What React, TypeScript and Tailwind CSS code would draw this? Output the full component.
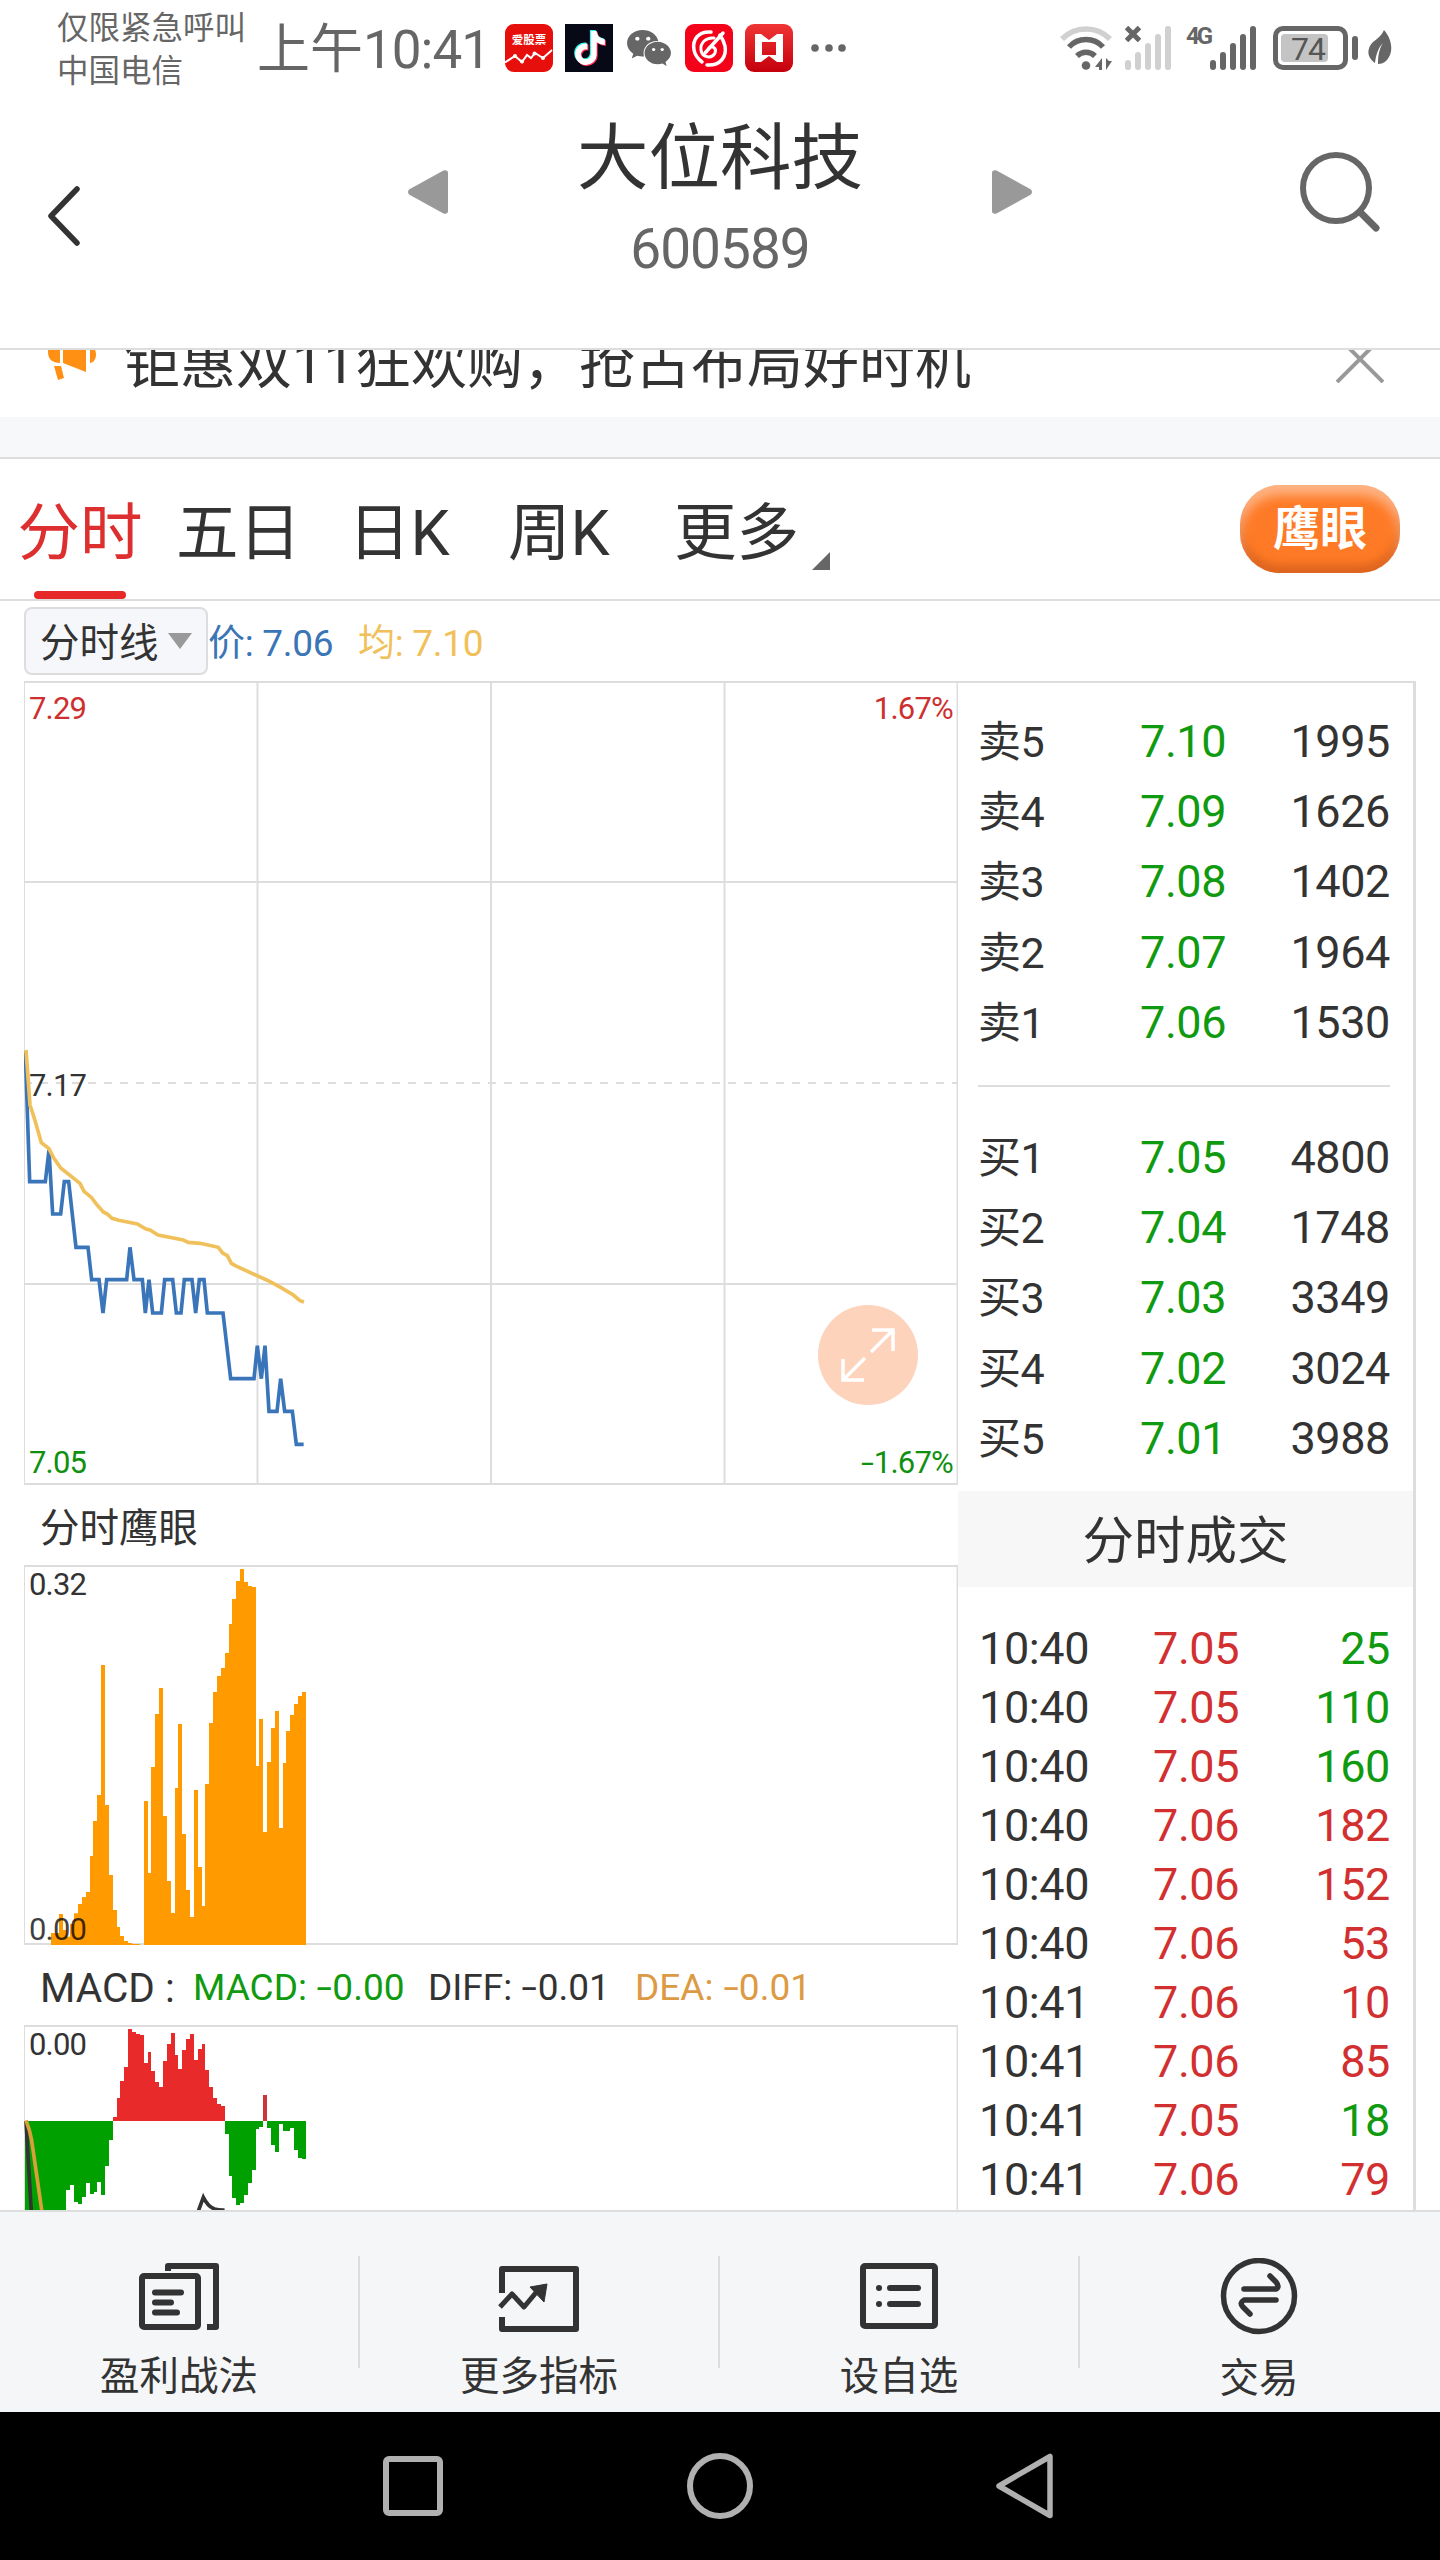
import type { ReactNode } from 'react';
import clsx from 'clsx';
import { FaTiktok, FaWeixin } from 'react-icons/fa6';

type Step = [x: number, y: number];

const asks = [
  ['卖5', '7.10', '1995'],
  ['卖4', '7.09', '1626'],
  ['卖3', '7.08', '1402'],
  ['卖2', '7.07', '1964'],
  ['卖1', '7.06', '1530'],
];

const bids = [
  ['买1', '7.05', '4800'],
  ['买2', '7.04', '1748'],
  ['买3', '7.03', '3349'],
  ['买4', '7.02', '3024'],
  ['买5', '7.01', '3988'],
];

const trades = [
  { time: '10:40', price: '7.05', volume: 25, side: 'sell' },
  { time: '10:40', price: '7.05', volume: 110, side: 'sell' },
  { time: '10:40', price: '7.05', volume: 160, side: 'sell' },
  { time: '10:40', price: '7.06', volume: 182, side: 'buy' },
  { time: '10:40', price: '7.06', volume: 152, side: 'buy' },
  { time: '10:40', price: '7.06', volume: 53, side: 'buy' },
  { time: '10:41', price: '7.06', volume: 10, side: 'buy' },
  { time: '10:41', price: '7.06', volume: 85, side: 'buy' },
  { time: '10:41', price: '7.05', volume: 18, side: 'sell' },
  { time: '10:41', price: '7.06', volume: 79, side: 'buy' },
];

// Chart series are stored at 3 units per pixel, bars as [left, top]
const pricePoints =
  '76,65 89,455 136,455 147,360 158,552 182,552 193,455 206,455 228,652 264,652 275,749 297,749 309,849 320,749 380,749 390,652 402,749 427,749 436,849 447,749 458,849 484,849 494,749 518,749 529,849 543,849 553,749 576,749 587,849 598,749 612,749 622,849 669,849 692,1046 762,1046 772,947 784,1046 795,947 807,1144 831,1144 842,1046 854,1144 877,1144 889,1243 911,1243';
const averagePoints =
  '78,60 90,225 103,265 124,338 147,356 160,382 182,414 240,460 252,484 275,503 288,521 310,546 322,552 336,565 356,571 412,582 438,597 450,600 474,615 550,630 565,637 600,640 655,652 668,669 682,677 694,700 706,707 738,722 800,750 842,772 880,795 900,812 912,816';

const eagleLeft: Step[] = [
  [153, 1299], [177, 1242], [189, 1290], [201, 1310], [210, 1272], [222, 1240], [234, 1212], [246, 1191], [258, 1176],
  [270, 1068], [279, 963], [291, 885], [303, 495], [315, 915], [327, 1125], [339, 1230], [351, 1281], [360, 1308],
  [372, 1323], [384, 1329], [396, 1332],
];
const eagleRight: Step[] = [
  [432, 903], [444, 1119], [453, 801], [465, 642], [477, 564], [489, 948], [501, 1143], [513, 1239], [525, 864],
  [534, 672], [546, 1002], [558, 1170], [570, 1251], [582, 870], [594, 1101], [606, 1218], [615, 852], [627, 669],
  [639, 576], [651, 528], [663, 504], [675, 459], [687, 372], [696, 297], [708, 243], [720, 207], [732, 246],
  [744, 258], [756, 261], [768, 798], [777, 657], [789, 996], [801, 786], [813, 684], [825, 633], [837, 984],
  [849, 789], [858, 693], [870, 645], [882, 612], [894, 588], [906, 576],
];
const macdFall: Step[] = [
  [75, 760], [198, 690], [210, 675], [222, 726], [234, 732], [246, 711], [258, 669], [270, 702], [282, 696],
  [291, 666], [303, 705], [315, 618], [327, 540],
];
const macdRise: Step[] = [
  [339, 471], [351, 414], [360, 363], [372, 321], [384, 207], [396, 216], [408, 222], [420, 225], [432, 309],
  [444, 276], [453, 333], [465, 366], [477, 381], [489, 303], [501, 252], [513, 219], [525, 285], [534, 327],
  [546, 270], [558, 237], [570, 222], [582, 300], [594, 267], [606, 252], [615, 330], [627, 381], [639, 414],
  [651, 432], [663, 438],
];
const macdDip: Step[] = [
  [675, 522], [687, 648], [696, 714], [708, 735], [720, 729], [732, 705], [744, 669], [756, 630], [768, 507], [777, 501],
];
const macdTail: Step[] = [
  [801, 504], [813, 555], [825, 576], [837, 492], [849, 513], [870, 504], [882, 570], [894, 594], [906, 597],
];

function stepPath(steps: Step[], end: number, base: number) {
  return `M${steps[0][0]} ${base}${steps.map(([x, y]) => `H${x}V${y}`).join('')}H${end}V${base}Z`;
}

function SignalBars({ className }: { className: string }) {
  return (
    <svg className={className} width="46" height="44" viewBox="0 0 46 44" fill="currentColor">
      <rect x="0" y="34" width="6" height="10" rx="3" />
      <rect x="10" y="26" width="6" height="18" rx="3" />
      <rect x="20" y="17" width="6" height="27" rx="3" />
      <rect x="30" y="8" width="6" height="36" rx="3" />
      <rect x="40" y="0" width="6" height="44" rx="3" />
    </svg>
  );
}

function StatusBar() {
  return (
    <div className="flex h-[96px] items-center pl-[57px] pr-[48px] text-[#666]">
      <div className="w-[200px] pt-1 text-[31.5px] leading-[43px]">
        <div>仅限紧急呼叫</div>
        <div>中国电信</div>
      </div>
      <div className="w-[248px] whitespace-nowrap pt-1 text-[53px] leading-[60px]">
        上午<span className="tracking-[-1px]">10:41</span>
      </div>

      <div className="flex items-center gap-3">
        <svg width="48" height="48" viewBox="0 0 48 48">
          <rect width="48" height="48" rx="9" fill="#e60f0c" />
          <text x="24" y="20" textAnchor="middle" fontSize="11.5" fontWeight="700" fill="#fff">爱股票</text>
          <path d="M0 38.5 10 32l7 6 5-7 4 3 4-5 8 5 9-8" fill="none" stroke="#fff" strokeWidth="2" />
          <g fill="#fff">
            <circle cx="10" cy="32" r="2" />
            <circle cx="17" cy="37.500" r="2" />
            <circle cx="29.500" cy="29.500" r="2" />
            <circle cx="38" cy="34" r="2" />
          </g>
        </svg>
        <div className="relative size-12 bg-[#070916]">
          <FaTiktok className="absolute left-[7px] top-[6px] size-[34px] text-[#25f4ee]" />
          <FaTiktok className="absolute left-[9px] top-[8px] size-[34px] text-[#fe2c55]" />
          <FaTiktok className="absolute left-[8px] top-[7px] size-[34px] text-white" />
        </div>
        <FaWeixin className="size-12 px-px text-[#666]" />
        <svg width="48" height="48" viewBox="0 0 48 48">
          <rect width="48" height="48" rx="9" fill="#f40219" />
          <g fill="none" stroke="#fff" strokeLinecap="round">
            <path d="M26 8C14 7 7 15 9 26c1 5 4 9 8 12" strokeWidth="3.500" />
            <path d="M22 41c13 1 20-8 18-19-1-5-3-8-5-11" strokeWidth="3.500" />
            <path d="M29 14c-8-1-14 5-13 12 1 8 11 9 14 3 2-5-3-8-6-5" strokeWidth="3" />
            <path d="M38 9 20 29" strokeWidth="3.500" />
          </g>
        </svg>
        <svg width="48" height="48" viewBox="0 0 48 48">
          <defs>
            <linearGradient id="red" x1="0" y1="0" x2="0" y2="1">
              <stop offset="0" stopColor="#f03535" />
              <stop offset="1" stopColor="#c4000c" />
            </linearGradient>
          </defs>
          <rect width="48" height="48" rx="9" fill="url(#red)" />
          <path d="M10 10h6l8 6 8-6h6v28h-6l-8-6-8 6h-6zM17 18v13h14V18z" fill="#fff" fillRule="evenodd" />
        </svg>
        <svg className="ml-[6px]" width="36" height="8" viewBox="0 0 36 8" fill="currentColor">
          <circle cx="4" cy="4" r="3.800" />
          <circle cx="18" cy="4" r="3.800" />
          <circle cx="31" cy="4" r="3.800" />
        </svg>
      </div>

      <div className="ml-auto flex items-center">
        <svg width="54" height="44" viewBox="0 0 54 44" fill="none" stroke="#666" strokeWidth="5.500">
          <path d="M2 13C15-.5 37-.5 50 13" stroke="#d0d0d0" />
          <path d="M9 21C18 11 34 11 43 21" />
          <path d="M17 30c5-5 13-5 18 0" />
          <circle cx="26" cy="39.500" r="4.300" fill="#666" stroke="none" />
          <path d="M42 32v12h-3v-3h-4zM46 32v12l6-9h-3z" fill="#666" stroke="none" />
        </svg>
        <div className="relative ml-[11px]">
          <SignalBars className="text-[#d0d0d0]" />
          <svg className="absolute left-0 top-0" width="16" height="16" viewBox="0 0 16 16" stroke="#666" strokeWidth="5">
            <path d="M1.500 1.500l13 13M14.500 1.500l-13 13" />
          </svg>
        </div>
        <span className="mb-[24px] ml-[15px] w-[24px] text-[24px] font-bold leading-[20px] tracking-[-3px]">4G</span>
        <SignalBars className="text-[#666]" />
        <div className="ml-[17px] flex h-[44px] w-[75px] rounded-[10px] border-[5px] border-[#666] p-[3px]">
          <div className="w-[47px] rounded bg-[#c4c4c4] pl-[10px] text-[32px] leading-[30px] tracking-[-1px] text-[#555]">74</div>
        </div>
        <div className="ml-1 h-6 w-[6px] rounded-full bg-[#666]" />
        <svg className="ml-[10px]" width="24" height="36" viewBox="0 0 24 36" fill="#666">
          <path d="M16 0c8 9 10 22 3 30-3 3-6 4-9 4 0-8 1-15 5-21C10 18 8 25 7 33-2 27-1 18 5 12c5-4 9-7 11-12z" />
        </svg>
      </div>
    </div>
  );
}

function Header() {
  return (
    <div className="flex h-[254px] items-start border-b-2 border-[#ddd] pl-12">
      <svg className="mt-[89px]" width="32" height="62" viewBox="0 0 32 62" fill="none" stroke="#333" strokeWidth="5.500" strokeLinecap="round" strokeLinejoin="round">
        <path d="M29 4 3 31l26 27" />
      </svg>
      <svg className="ml-[328px] mt-[74px]" width="40" height="44" viewBox="0 0 40 44" fill="#999">
        <path d="M1 19.500 35.500.500Q40-.500 40 3v38q0 3.500-4.500 2.500L1 24.500q-2-2.500 0-5z" />
      </svg>
      <div className="w-[544px] text-center">
        <h1 className="mt-[23px] text-[71.5px] leading-[80px] text-[#333]">大位科技</h1>
        <div className="mt-[18px] text-[55px] leading-[64px] tracking-[-1px] text-[#666]">600589</div>
      </div>
      <svg className="mt-[74px]" width="40" height="44" viewBox="0 0 40 44" fill="#999">
        <path d="M39 19.500 4.500.500Q0-.500 0 3v38q0 3.500 4.500 2.500L39 24.500q2-2.500 0-5z" />
      </svg>
      <svg className="ml-[268px] mt-[55px]" width="82" height="82" viewBox="0 0 82 82" fill="none" stroke="#666" strokeWidth="6">
        <circle cx="36" cy="37" r="33" />
        <path d="M60 61l16 16" strokeWidth="7" strokeLinecap="round" />
      </svg>
    </div>
  );
}

function Banner() {
  return (
    <div className="flex h-[67px] items-start overflow-hidden pl-12 pr-14">
      <svg className="-mt-[20px]" width="50" height="52" viewBox="0 0 50 52" fill="#ff9013">
        <path d="M12 12v21C4 33 0 29 0 22s4-10 12-10zM15 13 38 2v40L15 33zM42 16c8 1 8 16 0 17zM6 36h7l3 12-6 2z" />
      </svg>
      <p className="-mt-[18px] ml-[26px] whitespace-nowrap text-[56px] leading-[64px] text-[#333]">钜惠双11狂欢购，抢占布局好时机</p>
      <svg className="-mt-[15px] ml-auto" width="48" height="48" viewBox="0 0 48 48" stroke="#999" strokeWidth="4">
        <path d="M1 1l46 46M47 1 1 47" />
      </svg>
    </div>
  );
}

function Tabs() {
  return (
    <div className="flex h-[142px] items-start border-b-2 border-[#ddd] text-[62.5px] leading-[72px] text-[#333]">
      <div className="ml-[17px] flex h-[140px] w-[126px] flex-col items-center pt-[39px] text-[#dd2f2f]">
        分时
        <div className="mt-auto h-2 w-[92px] rounded-full bg-[#e62828]" />
      </div>
      <div className="ml-[33px] w-[172px] pt-[39px]">五日</div>
      <div className="w-[160px] pt-[39px]">日K</div>
      <div className="w-[166px] pt-[39px]">周K</div>
      <div className="w-[138px] pt-[39px]">更多</div>
      <svg className="mt-[93px]" width="18" height="18" viewBox="0 0 18 18" fill="#666">
        <path d="M18 0v18H0z" />
      </svg>
      <button className="ml-auto mr-10 mt-[26px] h-[88px] w-[160px] rounded-[40px] bg-[#fe7a26] text-[47px] font-bold leading-[86px] text-white shadow-[inset_0_10px_12px_rgba(255,255,255,0.45),inset_0_-8px_10px_rgba(180,70,20,0.45)]">
        鹰眼
      </button>
    </div>
  );
}

// Wider than the font's own hyphen
function Minus() {
  return <span className="inline-block w-[0.44em] scale-x-150 text-center">-</span>;
}

function AxisLabel({ className, children }: { className: string; children: ReactNode }) {
  return <span className={clsx('absolute text-[31px] leading-8 tracking-[-0.8px]', className)}>{children}</span>;
}

function PriceChart() {
  return (
    <div className="relative h-[804px]">
      <svg className="block" width="934" height="804" viewBox="24 681 934 804" fill="none" stroke="#ddd" strokeWidth="2">
        <path d="M24 682h934M24 882h934M24 1284h934M24 1484h934M257.500 681v804M491 681v804M724.500 681v804M957.500 681v804" />
        <path d="M24.500 681v804" strokeWidth="1" />
        <path d="M24 1083h934" strokeDasharray="8 8" />
        <g transform="translate(0 1030) scale(0.33333)" strokeWidth="11">
          <polyline points={pricePoints} stroke="#3a75ba" />
          <polyline points={averagePoints} stroke="#f0c05a" />
        </g>
      </svg>
      <AxisLabel className="left-[5px] top-[12px] text-[#cc3030]">7.29</AxisLabel>
      <AxisLabel className="right-[5px] top-[12px] text-[#cc3030]">1.67%</AxisLabel>
      <AxisLabel className="left-[5px] top-[389px] text-[#333]">7.17</AxisLabel>
      <AxisLabel className="bottom-[6px] left-[5px] text-[#109010]">7.05</AxisLabel>
      <AxisLabel className="bottom-[6px] right-[5px] text-[#109010]"><Minus />1.67%</AxisLabel>
      <button className="absolute bottom-[80px] right-[40px] flex size-[100px] items-center justify-center rounded-full bg-[#fdd3bb]">
        <svg width="54" height="54" viewBox="0 0 54 54" fill="none" stroke="#fff" strokeWidth="3.500">
          <path d="M31 2h21v21M52 2 30 24M2 31v21h21M2 52l22-22" />
        </svg>
      </button>
    </div>
  );
}

function EagleChart() {
  return (
    <div className="relative h-[380px]">
      <svg className="block" width="934" height="380" viewBox="24 1565 934 380" fill="none" stroke="#ddd" strokeWidth="2">
        <path d="M24 1566h934M24 1944h934M957.500 1565v380" />
        <path d="M24.500 1565v380" strokeWidth="1" />
        <g transform="translate(0 1500) scale(0.33333)" fill="#ff9b00" stroke="none">
          <path d={stepPath(eagleLeft, 420, 1335)} />
          <path d={stepPath(eagleRight, 918, 1335)} />
        </g>
      </svg>
      <AxisLabel className="left-[5px] top-[4px] text-[#333]">0.32</AxisLabel>
      <AxisLabel className="-bottom-px left-[5px] text-black/75">0.00</AxisLabel>
    </div>
  );
}

function MacdChart() {
  return (
    <div className="relative h-[185px]">
      <svg className="block" width="934" height="185" viewBox="24 2025 934 185" fill="none" stroke="#ddd" strokeWidth="2">
        <path d="M24 2026h934M957.500 2025v190" />
        <path d="M24.500 2025v190" strokeWidth="1" />
        <g transform="translate(0 1960) scale(0.33333)" stroke="none">
          <path d={stepPath(macdFall, 339, 483)} fill="#00a000" />
          <path d={stepPath(macdRise, 675, 483)} fill="#e92a2a" />
          <path d={stepPath(macdDip, 789, 483)} fill="#00a000" />
          <path d="M789 483V405h12v78z" fill="#cc3535" />
          <path d={stepPath(macdTail, 918, 483)} fill="#00a000" />
        </g>
        <g transform="translate(0 1960) scale(0.33333)" strokeWidth="11">
          <path d="M78 483 94 756M594 756l16-44q14 28 34 35 14 4 30 3" stroke="#333" />
          <path d="M78 481q12 30 17 60l31 215" stroke="#d8a038" />
        </g>
      </svg>
      <AxisLabel className="left-[5px] top-[4px] text-[#333]">0.00</AxisLabel>
    </div>
  );
}

function OrderRows({ rows }: { rows: string[][] }) {
  return (
    <>
      {rows.map(([label, price, volume]) => (
        <div key={label} className="grid h-[70.2px] grid-cols-[162px_110px_1fr] items-center text-[45px] leading-[50px] tracking-[-0.4px]">
          <span className="text-[43px]">{label}</span>
          <span className="text-[#109a10]">{price}</span>
          <span className="text-right">{volume}</span>
        </div>
      ))}
    </>
  );
}

function OrderBook() {
  return (
    <div className="h-[1529px] w-[458px] border-r-[3px] border-t-2 border-[#ddd] text-[#333]">
      <div className="pl-[20px] pr-[23px] pt-[24px]">
        <OrderRows rows={asks} />
        <div className="mb-[36px] mt-[27px] h-[2px] bg-[#ddd]" />
        <OrderRows rows={bids} />
      </div>
      <div className="mt-[17px] h-[96px] bg-[#f7f7f7] text-center text-[51.5px] leading-[102px]">分时成交</div>
      <div className="pl-[21px] pr-[23px] pt-[33px]">
        {trades.map((t, i) => (
          <div key={i} className="grid h-[59px] grid-cols-[174px_110px_1fr] items-center text-[45px] leading-[50px] tracking-[-0.4px]">
            <span>{t.time}</span>
            <span className="text-[#d23030]">{t.price}</span>
            <span className={clsx('text-right', t.side === 'buy' ? 'text-[#d23030]' : 'text-[#109a10]')}>{t.volume}</span>
          </div>
        ))}
      </div>
    </div>
  );
}

function ToolbarItem({ label, last, children }: { label: string; last?: boolean; children: ReactNode }) {
  return (
    <div className={clsx('relative flex flex-1 flex-col items-center pr-[2px]', last ? 'pt-[2px]' : 'after:absolute after:right-0 after:top-[44px] after:h-[112px] after:w-[2px] after:bg-[#ddd]')}>
      <svg className="mt-[44px]" width="82" height="78" viewBox="0 0 82 78" fill="none" stroke="#333" strokeWidth="6" strokeLinejoin="round">
        {children}
      </svg>
      <span className="mt-[19px] text-[39.5px] leading-[48px] text-[#333]">{label}</span>
    </div>
  );
}

function Toolbar() {
  return (
    <div className="flex h-[202px] border-t-2 border-[#ddd] bg-[#f5f6f8]">
      <ToolbarItem label="盈利战法">
        <rect x="4" y="20" width="56" height="51" rx="2" />
        <path d="M30 15v-5h48v61h-9" />
        <path d="M17 36.500h26M17 46.500h16M17 56.500h22" strokeLinecap="round" />
      </ToolbarItem>
      <ToolbarItem label="更多指标">
        <path d="M4 37V13h74v60H4V61" />
        <path d="M2 51l12-13 12 13 15-18" strokeWidth="5" />
        <path d="M32 31l17-3-3 18z" fill="#333" strokeWidth="1" />
      </ToolbarItem>
      <ToolbarItem label="设自选">
        <rect x="5" y="10" width="72" height="60" rx="2" />
        <path d="M32 32h28M32 48h28M21 32h.01M21 48h.01" strokeLinecap="round" />
      </ToolbarItem>
      <ToolbarItem label="交易" last>
        <circle cx="41" cy="38" r="35.500" strokeWidth="5.500" />
        <path d="M26 31h32q4-2 0-7l-6-6M58 42H26q-5 3-1 7l7 7" strokeWidth="5.500" strokeLinecap="round" />
      </ToolbarItem>
    </div>
  );
}

function NavBar() {
  return (
    <div className="flex h-[148px] items-center bg-black pl-[380px]">
      <svg width="66" height="66" viewBox="0 0 66 66" fill="none" stroke="#b0b0b0" strokeWidth="6">
        <rect x="6" y="6" width="54" height="54" rx="3" />
      </svg>
      <svg className="ml-[241px]" width="66" height="66" viewBox="0 0 66 66" fill="none" stroke="#b0b0b0" strokeWidth="6">
        <circle cx="33" cy="33" r="30" />
      </svg>
      <svg className="ml-[242px]" width="60" height="66" viewBox="0 0 60 66" fill="none" stroke="#b0b0b0" strokeWidth="5.500" strokeLinejoin="round">
        <path d="M4 33 55 3.500v59z" />
      </svg>
    </div>
  );
}

export default function App() {
  return (
    <div className="h-[2560px] w-[1440px] overflow-hidden bg-white font-['Roboto','Noto_Sans_CJK_SC',sans-serif]">
      <StatusBar />
      <Header />
      <Banner />
      <div className="h-[42px] border-b-2 border-[#ddd] bg-[#f7f8fa]" />
      <Tabs />

      <div className="flex h-[80px] items-start pl-6 pt-[6px] text-[37px] leading-[74px]">
        <button className="flex h-[68px] w-[184px] items-center rounded-lg border-2 border-[#ddd] bg-[#f6f7fb] pl-[14px] text-[39.5px] text-[#333]">
          <span className="pt-[5px]">分时线</span>
          <svg className="ml-[9px]" width="24" height="16" viewBox="0 0 24 16" fill="#999">
            <path d="M0 0h24L12 16z" />
          </svg>
        </button>
        <span className="w-[150px] tracking-[-0.3px] text-[#3a75b5]">价: 7.06</span>
        <span className="tracking-[-0.3px] text-[#f0c05a]">均: 7.10</span>
      </div>

      <div className="flex pl-6">
        <div className="w-[934px]">
          <PriceChart />
          <h2 className="h-[80px] pl-4 text-[39.5px] leading-[88px] text-[#333]">分时鹰眼</h2>
          <EagleChart />
          <div className="flex h-[80px] items-center whitespace-nowrap pl-4 pt-[6px] text-[37px] text-[#333]">
            <span className="w-[153px] text-[40.5px]">MACD :</span>
            <span className="w-[235px] text-[#109a10]">MACD: <Minus />0.00</span>
            <span className="w-[207px]">DIFF: <Minus />0.01</span>
            <span className="text-[#dd9a44]">DEA: <Minus />0.01</span>
          </div>
          <MacdChart />
        </div>
        <OrderBook />
      </div>

      <Toolbar />
      <NavBar />
    </div>
  );
}
